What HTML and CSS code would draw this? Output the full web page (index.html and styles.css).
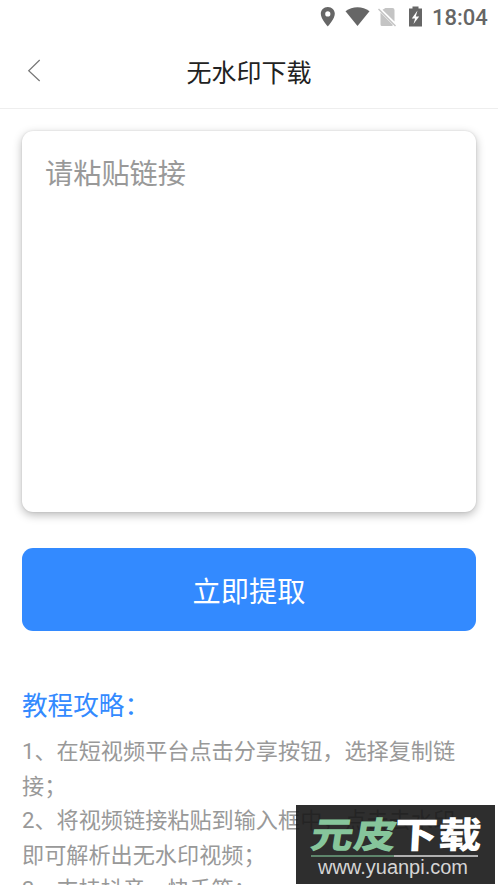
FILE: index.html
```html
<!DOCTYPE html>
<html lang="zh-CN">
<head>
<meta charset="utf-8">
<title>无水印下载</title>
<link rel="stylesheet" href="styles.css">
</head>
<body>
<div class="screen">
  <div class="status">
    <svg class="status-icons" width="106" height="32" viewBox="0 0 106 32">
      <path fill="#666" fill-rule="evenodd" d="M7.8 7C3.7 7 .8 10 .8 13.8.8 19 7.8 26.500 7.8 26.500s7-7.500 7-12.700C14.800 10 11.900 7 7.800 7zm0 4.300a2.600 2.600 0 1 1 0 5.200 2.600 2.600 0 0 1 0-5.200z"/>
      <path fill="#666" d="M25.500 11.200C32.500 5.800 42.500 5.800 49.500 11.200L37.500 26z"/>
      <path fill="#c4c4c4" d="M65.500 8H72.500Q74.500 8 74.500 10V21.500L62.500 9.800zM60.500 12.500L73 25Q72.500 26 71.500 26H62Q60.500 26 60.500 24.500z"/>
      <path stroke="#c4c4c4" stroke-width="1.500" d="M58.500 9L75.500 26"/>
      <path fill="#666" d="M92.500 6.500h6v2h3.500v18H89v-18h3.500z"/>
      <path fill="#fff" d="M97.500 10.500L91.800 18.500h3.300L93.500 24l5.700-7.500h-3.400z"/>
    </svg>
    <span class="clock">18:04</span>
  </div>
  <header class="navbar">
    <svg class="back" width="16" height="26" viewBox="0 0 16 26"><path d="M13.700 2L2.700 12.700 13.700 23" fill="none" stroke="#777" stroke-width="1.200"/></svg>
    <h1>无水印下载</h1>
  </header>
  <main>
    <div class="link-box">请粘贴链接</div>
    <div class="submit">立即提取</div>
    <h2>教程攻略：</h2>
    <div class="steps">
      <p>1、在短视频平台点击分享按钮，选择复制链接；</p>
      <p>2、将视频链接粘贴到输入框中，点击去水印即可解析出无水印视频；</p>
      <p>3、支持抖音、快手等；</p>
    </div>
  </main>
  <div class="watermark">
    <svg width="199" height="79" viewBox="0 0 199 79">
      <g class="brand">
        <text fill="#86c59b" transform="translate(13 42.500) skewX(-9) scale(1.160 1)" textLength="74" lengthAdjust="spacingAndGlyphs">元皮</text>
        <text fill="#fff" transform="translate(98 42.500) skewX(-3) scale(1.160 1)" textLength="75" lengthAdjust="spacingAndGlyphs">下载</text>
      </g>
      <path stroke="#6fa382" stroke-width="1.500" d="M15 51H98"/>
      <path stroke="#ddd" stroke-width="1.500" d="M98 51H182"/>
      <text class="site" x="22" y="68.500" textLength="150" lengthAdjust="spacingAndGlyphs">www.yuanpi.com</text>
    </svg>
  </div>
</div>
</body>
</html>
```
FILE: styles.css
```css
* { box-sizing: border-box; }
body {
  margin: 0;
  background: #fff;
  font-family: Roboto, "Noto Sans CJK SC", sans-serif;
}
h1, h2, p { margin: 0; font-weight: 400; }
.screen {
  position: relative;
  height: 885px;
  overflow: hidden;
}
.status {
  display: flex;
  justify-content: flex-end;
  height: 36px;
  padding-right: 11px;
  color: #666;
}
.status-icons { margin-right: 6px; }
.clock {
  font-size: 22px;
  font-weight: 500;
  line-height: 35px;
  width: 55px;
  white-space: nowrap;
}
.navbar {
  display: grid;
  grid-template-columns: 60px 1fr 60px;
  align-items: center;
  height: 73px;
  border-bottom: 1px solid #eee;
}
.back { margin-left: 26px; margin-top: -2px; }
h1 {
  padding-top: 3px;
  text-align: center;
  font-size: 25px;
  line-height: 36px;
  color: #222;
}
main { padding: 22px 22px 0; }
.link-box {
  height: 381px;
  padding: 24px 23px;
  border-radius: 11px;
  background: #fff;
  box-shadow: 0 3px 10px rgba(0, 0, 0, .28), 0 0 2px rgba(0, 0, 0, .12);
  color: #999;
  font-size: 28.2px;
  line-height: 40px;
}
.submit {
  height: 83px;
  margin-top: 36px;
  border-radius: 11px;
  background: #338aff;
  color: #fff;
  font-size: 28.2px;
  line-height: 89px;
  text-align: center;
}
h2 {
  margin-top: 56px;
  font-size: 25.6px;
  line-height: 38px;
  color: #338aff;
}
.steps {
  margin-top: 9px;
  width: 440px;
  color: #999;
  font-size: 22.15px;
  line-height: 34.5px;
}
.watermark {
  position: absolute;
  left: 296px;
  top: 805px;
  width: 199px;
  height: 79px;
  background: rgba(23, 23, 23, .9);
}
.watermark svg { display: block; }
.brand {
  font-family: "Noto Sans CJK SC", sans-serif;
  font-size: 36px;
  font-weight: 900;
}
.site {
  font-family: "Liberation Sans", sans-serif;
  font-size: 20px;
  fill: #d5d5d5;
}
```
